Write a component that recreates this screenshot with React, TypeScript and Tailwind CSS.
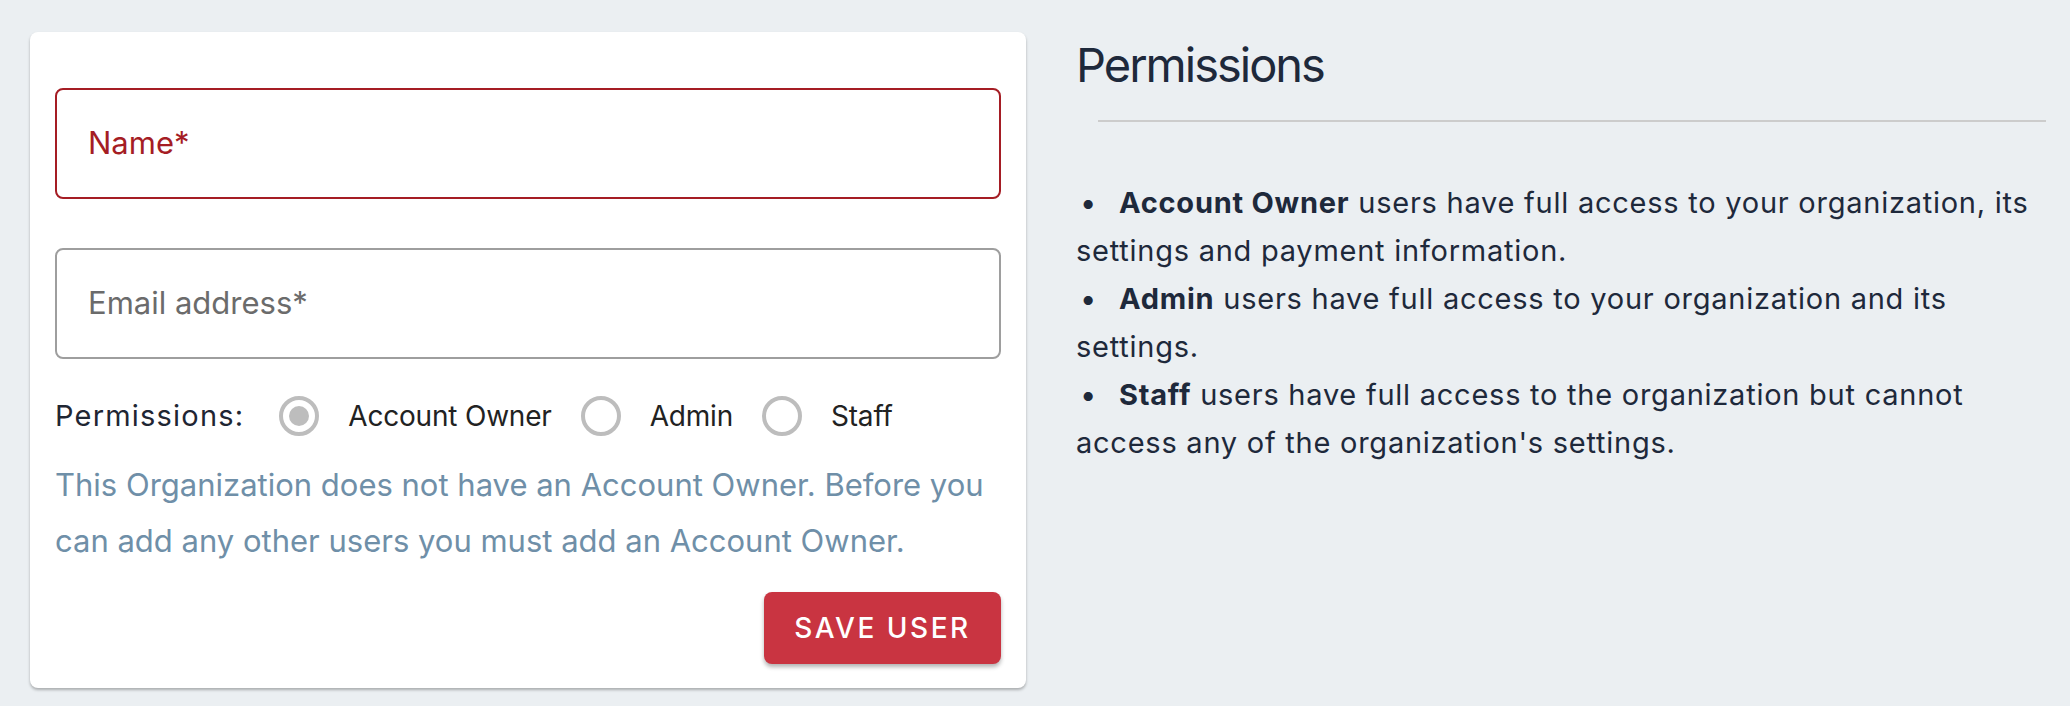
import React from 'react';

const font = { fontFamily: 'Inter, "Noto Sans", sans-serif' };

function Radio({ checked, label }: { checked?: boolean; label: string }) {
  return (
    <label className="flex items-center">
      <span className="flex items-center justify-center w-[40px] h-[40px] rounded-full border-[4px] border-[#bdbdbd]">
        {checked && <span className="w-[20px] h-[20px] rounded-full bg-[#bdbdbd]" />}
      </span>
      <span className="ml-[29px] text-[28px] tracking-[-0.2px] text-[#222222]">{label}</span>
    </label>
  );
}

export default function App() {
  const roles = [
    { name: 'Account Owner', text: 'users have full access to your organization, its settings and payment information.' },
    { name: 'Admin', text: 'users have full access to your organization and its settings.' },
    { name: 'Staff', text: "users have full access to the organization but cannot access any of the organization's settings." },
  ];

  return (
    <div className="min-h-[706px] bg-[#ebeff2] pt-[32px] pl-[30px] pr-[24px] flex items-start gap-[50px]" style={font}>
      {/* Form card */}
      <div className="w-[996px] shrink-0 bg-white rounded-[8px] shadow-[0_2px_3px_rgba(0,0,0,0.28)] pt-[56px] px-[25px] pb-[24px]">
        <div className="h-[111px] border-2 border-[#a51d24] rounded-[8px] flex items-center px-[31px]">
          <span className="text-[31px] text-[#a51d24]">Name*</span>
        </div>
        <div className="mt-[49px] h-[111px] border-2 border-[#9e9e9e] rounded-[8px] flex items-center px-[31px]">
          <span className="text-[31px] text-[#6b6b6b]">Email address*</span>
        </div>

        <div className="mt-[37px] h-[40px] flex items-center gap-[29px]">
          <span className="text-[29px] tracking-[1.2px] text-[#1f2633] mr-[6px]">Permissions:</span>
          <Radio checked label="Account Owner" />
          <Radio label="Admin" />
          <Radio label="Staff" />
        </div>

        <p className="mt-[21px] text-[31px] leading-[56px] text-[#6f8fa8]">
          This Organization does not have an Account Owner. Before you can add any other users you must add an Account Owner.
        </p>

        <div className="mt-[23px] flex justify-end">
          <button className="w-[237px] h-[72px] rounded-[8px] bg-[#c93441] text-white text-[28px] font-medium tracking-[2.5px] shadow-[0_3px_4px_rgba(0,0,0,0.3)]">
            SAVE USER
          </button>
        </div>
      </div>

      {/* Permissions description */}
      <div className="flex-1">
        <h2 className="mt-[9px] text-[47px] leading-[48px] tracking-[-2px] text-[#1e293b]">Permissions</h2>
        <div className="mt-[31px] ml-[22px] h-[2px] bg-[#cccccc]" />
        <ul className="mt-[57px] text-[29px] leading-[48px] tracking-[0.75px] text-[#1e293b]">
          {roles.map((r) => (
            <li key={r.name}>
              <span className="inline-block w-[43px] pl-[4px]">•</span>
              <b className="font-bold">{r.name}</b> {r.text}
            </li>
          ))}
        </ul>
      </div>
    </div>
  );
}
